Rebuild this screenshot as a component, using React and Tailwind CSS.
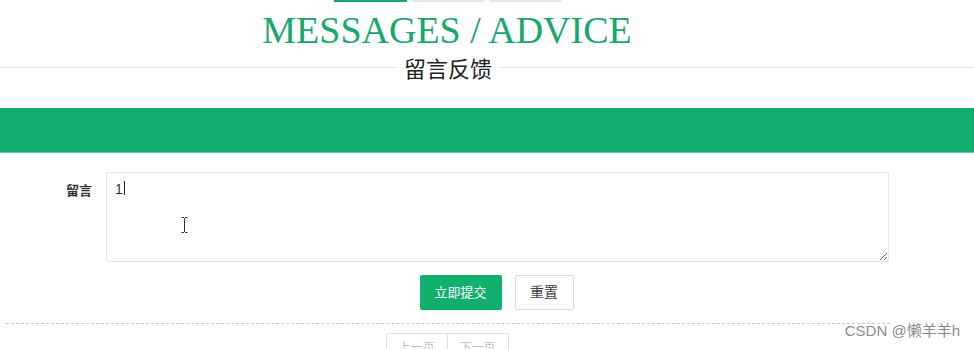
import React from "react";

export default function App() {
  const sans = { fontFamily: '"Liberation Sans", "Noto Sans CJK SC", Arial, sans-serif' };
  return (
    <div className="relative w-[974px] h-[349px] overflow-hidden bg-white text-[#333]" style={sans}>
      {/* heading block */}
      <div className="ml-[5px] w-[884px] flex flex-col items-center">
        <div className="flex gap-[5px]">
          <div className="w-[73px] h-[2px] bg-[#16a86c]" />
          <div className="w-[72px] h-[2px] bg-[#e6e6e6]" />
          <div className="w-[72px] h-[2px] bg-[#e6e6e6]" />
        </div>
        <div
          className="mt-[9px] text-[38px] leading-[38px] text-[#16a86c] whitespace-nowrap"
          style={{ fontFamily: '"Liberation Serif", "Times New Roman", serif' }}
        >
          MESSAGES / ADVICE
        </div>
      </div>
      <div className="mt-[6px] flex items-center h-[24px]">
        <div className="w-[397px] h-px bg-[#e2e2e2]" />
        <div
          className="px-[7px] text-[22px] leading-[24px] text-[#222] whitespace-nowrap"
          style={{ fontFamily: '"Noto Sans CJK SC", sans-serif' }}
        >
          留言反馈
        </div>
        <div className="flex-1 h-px bg-[#e2e2e2]" />
      </div>

      {/* green bar */}
      <div className="mt-[29px] h-[45px] bg-[#10af6e] border-b border-[#5cc796]" />

      {/* form */}
      <div className="mt-[19px] flex">
        <div className="w-[106px] pr-[14px] pt-[9px] text-right text-[13px] leading-[20px] font-semibold text-[#333]">
          留言
        </div>
        <div className="relative w-[783px] h-[90px]">
          <textarea
            defaultValue="1"
            className="block w-full h-full border border-[#e6e6e6] rounded-[2px] px-[8px] py-[6px] text-[14px] leading-[20px] text-[#333] outline-none"
            style={sans}
          />
          <span className="absolute left-[18px] top-[9px] w-px h-[14px] bg-[#222]" />
          <svg className="absolute left-[75px] top-[45px]" width="7" height="16" viewBox="0 0 7 16">
            <path d="M0.5 0.5h2.5M4 0.5h2.5M3.5 1v14M0.5 15.5h2.5M4 15.5h2.5" stroke="#333" strokeWidth="1" fill="none" />
          </svg>
        </div>
      </div>

      {/* buttons */}
      <div className="mt-[13px] ml-[106px] w-[781px] flex justify-center gap-[13px]">
        <button className="w-[82px] h-[35px] rounded-[2px] bg-[#12b06f] text-white text-[13px]">立即提交</button>
        <button className="w-[59px] h-[35px] rounded-[2px] border border-[#dcdcdc] bg-white text-[#444] text-[14px]">重置</button>
      </div>

      {/* dashed line */}
      <div className="mt-[13px] ml-[6px] w-[884px] border-t border-dashed border-[#c8c8c8]" />

      {/* pagination */}
      <div className="mt-[9px] ml-[5px] w-[884px] flex justify-center">
        <div className="flex border border-[#e2e2e2] rounded-[2px] text-[12px] text-[#c2c2c2]">
          <span className="h-[28px] leading-[28px] px-[11px] w-[60px] text-center">上一页</span>
          <span className="h-[28px] leading-[28px] px-[11px] w-[61px] text-center border-l border-[#e2e2e2]">下一页</span>
        </div>
      </div>

      {/* watermark */}
      <div className="absolute right-[14px] top-[322px] text-[15px] leading-[18px] text-[#8c8c8c] whitespace-nowrap">
        CSDN @懒羊羊h
      </div>
    </div>
  );
}
